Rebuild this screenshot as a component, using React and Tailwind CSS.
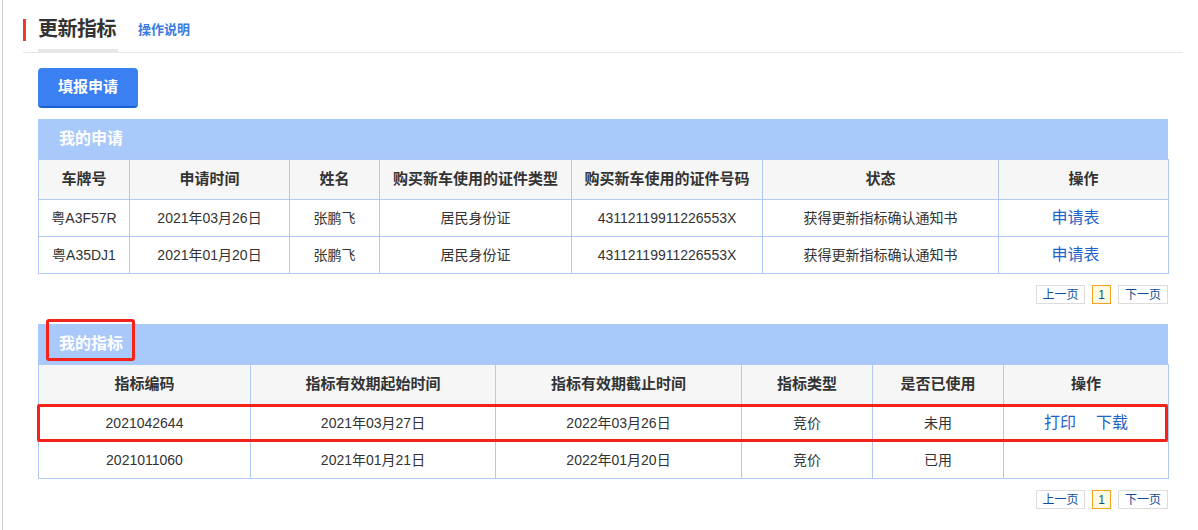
const APPLICATIONS = [
  { plate: '粤A3F57R', date: '2021年03月26日', name: '张鹏飞', idType: '居民身份证', idNo: '43112119911226553X', status: '获得更新指标确认通知书' },
  { plate: '粤A35DJ1', date: '2021年01月20日', name: '张鹏飞', idType: '居民身份证', idNo: '43112119911226553X', status: '获得更新指标确认通知书' },
];

const QUOTAS = [
  { code: '2021042644', start: '2021年03月27日', end: '2022年03月26日', type: '竞价', used: '未用', actions: true },
  { code: '2021011060', start: '2021年01月21日', end: '2022年01月20日', type: '竞价', used: '已用', actions: false },
];

const th = 'border border-[#afcaf6] font-bold text-[15px] text-[#333] text-center';
const td = 'border border-[#afcaf6] text-[14px] text-[#333] text-center';

function Pager() {
  return (
    <div className="flex justify-end gap-[7px] mt-[11px] text-[12px] leading-none">
      <button className="h-[19px] w-[49px] border border-[#dcdcdc] text-[#0f4f98] bg-white">上一页</button>
      <button className="h-[19px] w-[19px] border border-[#f4a221] bg-[#fffbe3] text-[#0f4f98]">1</button>
      <button className="h-[19px] w-[50px] border border-[#dcdcdc] text-[#0f4f98] bg-white">下一页</button>
    </div>
  );
}

function Band({ title, children }) {
  return (
    <div className="relative h-[40px] bg-[#a8c9fa] flex items-center pl-[21px] text-white font-bold text-[16px]">
      {title}
      {children}
    </div>
  );
}

export default function App() {
  return (
    <div className="min-h-[530px] ml-[2px] border-l border-[#cccccc] bg-white"
      style={{ fontFamily: '"Liberation Sans", "Noto Sans CJK SC", sans-serif' }}>
      {/* Header */}
      <div className="ml-[20px] mr-[15px] h-[53px] pt-[8px] flex items-center border-b border-[#e6e6e6]">
        <span className="w-[3px] h-[22px] bg-[#f23a2a]" />
        <span className="ml-[12px] h-full flex items-center w-[80px] border-b-[3px] border-[#e6e6e6] text-[20px] font-bold text-[#333] tracking-[-0.5px]">更新指标</span>
        <a className="ml-[20px] text-[13px] font-bold text-[#3a7be2] cursor-pointer">操作说明</a>
      </div>

      <div className="ml-[20px] mr-[15px] px-[15px]">
        <button className="mt-[15px] h-[40px] w-[100px] rounded-[4px] bg-[#3b80f2] border-b-2 border-[#1d5fd6] text-white font-bold text-[15px]">填报申请</button>

        {/* 我的申请 */}
        <div className="mt-[11px]">
          <Band title="我的申请" />
          <table className="w-full table-fixed border-collapse">
            <colgroup>
              <col className="w-[91px]" />
              <col className="w-[160px]" />
              <col className="w-[90px]" />
              <col className="w-[192px]" />
              <col className="w-[191px]" />
              <col className="w-[236px]" />
              <col className="w-[170px]" />
            </colgroup>
            <thead>
              <tr className="h-[40px] bg-[#f6f6f6]">
                <th className={th}>车牌号</th>
                <th className={th}>申请时间</th>
                <th className={th}>姓名</th>
                <th className={th}>购买新车使用的证件类型</th>
                <th className={th}>购买新车使用的证件号码</th>
                <th className={th}>状态</th>
                <th className={th}>操作</th>
              </tr>
            </thead>
            <tbody>
              {APPLICATIONS.map((a) => (
                <tr key={a.plate} className="h-[37px]">
                  <td className={td}>{a.plate}</td>
                  <td className={td}>{a.date}</td>
                  <td className={td}>{a.name}</td>
                  <td className={td}>{a.idType}</td>
                  <td className={td}>{a.idNo}</td>
                  <td className={td}>{a.status}</td>
                  <td className={`${td} pr-[16px]`}><a className="text-[16px] text-[#1f64c9] cursor-pointer">申请表</a></td>
                </tr>
              ))}
            </tbody>
          </table>
          <Pager />
        </div>

        {/* 我的指标 */}
        <div className="mt-[20px]">
          <Band title="我的指标">
            <div className="absolute left-[8px] top-[-5px] w-[89px] h-[42px] border-[3px] border-[#f5221b] rounded-[3px]" />
          </Band>
          <div className="relative">
            <table className="w-full table-fixed border-collapse">
              <colgroup>
                <col className="w-[212px]" />
                <col className="w-[245px]" />
                <col className="w-[246px]" />
                <col className="w-[131px]" />
                <col className="w-[131px]" />
                <col className="w-[165px]" />
              </colgroup>
              <thead>
                <tr className="h-[40px] bg-[#f6f6f6]">
                  <th className={th}>指标编码</th>
                  <th className={th}>指标有效期起始时间</th>
                  <th className={th}>指标有效期截止时间</th>
                  <th className={th}>指标类型</th>
                  <th className={th}>是否已使用</th>
                  <th className={th}>操作</th>
                </tr>
              </thead>
              <tbody>
                {QUOTAS.map((q) => (
                  <tr key={q.code} className="h-[37px]">
                    <td className={td}>{q.code}</td>
                    <td className={td}>{q.start}</td>
                    <td className={td}>{q.end}</td>
                    <td className={td}>{q.type}</td>
                    <td className={td}>{q.used}</td>
                    <td className={td}>
                      {q.actions && (
                        <span className="flex justify-center gap-[20px] text-[16px] text-[#1f64c9]">
                          <a className="cursor-pointer">打印</a>
                          <a className="cursor-pointer">下载</a>
                        </span>
                      )}
                    </td>
                  </tr>
                ))}
              </tbody>
            </table>
            <div className="absolute left-[-1px] top-[40px] w-[1131px] h-[38px] border-[3px] border-[#f5221b] rounded-[2px] pointer-events-none" />
          </div>
          <Pager />
        </div>
      </div>
    </div>
  );
}
